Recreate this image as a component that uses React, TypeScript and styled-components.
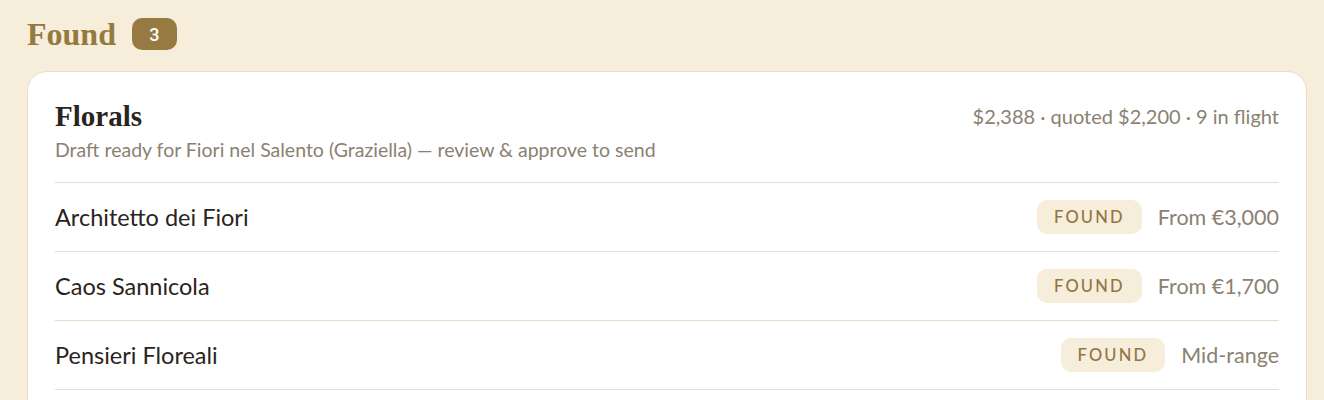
import styled, { createGlobalStyle } from 'styled-components'

type Vendor = {
    id: string
    name: string
    status: string
    price: string
}

const vendors: Vendor[] = [
    { id: 'architetto', name: 'Architetto dei Fiori', status: 'Found', price: 'From €3,000' },
    { id: 'caos', name: 'Caos Sannicola', status: 'Found', price: 'From €1,700' },
    { id: 'pensieri', name: 'Pensieri Floreali', status: 'Found', price: 'Mid-range' },
]

export default function App() {
    return (
        <>
            <GlobalStyle />
            <Page>
                <SectionHeader>
                    <SectionTitle>Found</SectionTitle>
                    <CountBadge>{vendors.length}</CountBadge>
                </SectionHeader>
                <Card>
                    <CardHeader>
                        <HeaderText>
                            <CardTitle>Florals</CardTitle>
                            <CardSubtitle>
                                Draft ready for Fiori nel Salento (Graziella) — review &amp; approve to send
                            </CardSubtitle>
                        </HeaderText>
                        <Meta>$2,388 · quoted $2,200 · 9 in flight</Meta>
                    </CardHeader>
                    <VendorList>
                        {vendors.map((vendor) => (
                            <VendorRow key={vendor.id}>
                                <VendorName>{vendor.name}</VendorName>
                                <RowRight>
                                    <StatusPill>{vendor.status}</StatusPill>
                                    <Price>{vendor.price}</Price>
                                </RowRight>
                            </VendorRow>
                        ))}
                    </VendorList>
                </Card>
            </Page>
        </>
    )
}

const GlobalStyle = createGlobalStyle`
    html, body {
        margin: 0;
        padding: 0;
        background: #f6eddb;
    }
    body {
        font-family: Lato, "Open Sans", sans-serif;
    }
`

// card runs on below the fold, clip it to the viewport
const Page = styled.div`
    padding: 14px 17px 0 27px;
    height: 400px;
    overflow: hidden;
    box-sizing: border-box;
    background: #f6eddb;
`

const SectionHeader = styled.div`
    display: flex;
    align-items: center;
    gap: 16px;
    height: 40px;
    margin-bottom: 17px;
`

const SectionTitle = styled.h2`
    margin: 0;
    font-family: "Liberation Serif", "DejaVu Serif", serif;
    font-size: 32px;
    font-weight: 600;
    color: #957a40;
`

const CountBadge = styled.span`
    display: inline-flex;
    align-items: center;
    justify-content: center;
    width: 45px;
    height: 32px;
    border-radius: 10px;
    background: #967a42;
    color: #fff;
    font-family: Roboto, sans-serif;
    font-size: 18px;
    font-weight: 500;
`

const Card = styled.section`
    background: #fff;
    border: 1px solid #eadfc8;
    border-radius: 20px;
    padding: 27px 27px 40px 27px;
`

const CardHeader = styled.div`
    display: flex;
    justify-content: space-between;
    align-items: flex-start;
    padding-bottom: 20px;
    border-bottom: 1px solid #e8dcc6;
`

const HeaderText = styled.div`
    display: flex;
    flex-direction: column;
    gap: 5px;
`

const CardTitle = styled.h3`
    margin: 0;
    font-family: "Liberation Serif", "DejaVu Serif", serif;
    font-size: 29px;
    font-weight: 600;
    line-height: 34px;
    color: #2a2420;
`

const CardSubtitle = styled.div`
    font-size: 19.5px;
    line-height: 24px;
    color: #8a8172;
`

const Meta = styled.div`
    margin-top: 5px;
    font-size: 20px;
    color: #8a8172;
`

const VendorList = styled.ul`
    margin: 0;
    padding: 0;
    list-style: none;
`

const VendorRow = styled.li`
    display: flex;
    align-items: center;
    justify-content: space-between;
    height: 68px;
    border-bottom: 1px solid #e8dcc6;
`

const VendorName = styled.span`
    font-size: 23.5px;
    color: #2a2420;
`

const RowRight = styled.div`
    display: flex;
    align-items: center;
    gap: 16px;
`

const StatusPill = styled.span`
    display: inline-flex;
    align-items: center;
    height: 34px;
    padding: 0 17px;
    border-radius: 10px;
    background: #f6eddb;
    color: #917542;
    font-size: 16.5px;
    font-weight: 500;
    letter-spacing: 2.2px;
    text-transform: uppercase;
`

const Price = styled.span`
    font-size: 21.5px;
    color: #8a8172;
`
